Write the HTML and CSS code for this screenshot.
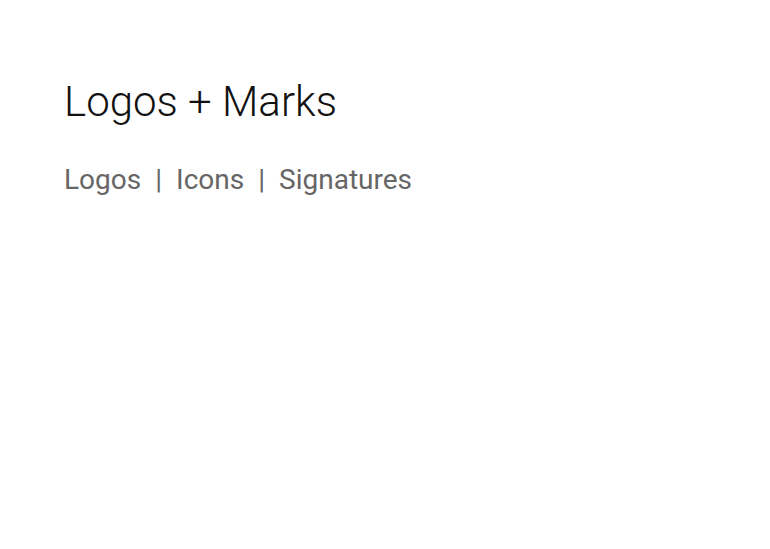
FILE: index.html
```html
<!DOCTYPE html>
<html>
<head>
<meta charset="utf-8">
<link rel="stylesheet" href="styles.css">
</head>
<body>
<main class="page">
  <h1 class="title">Logos + Marks</h1>
  <nav class="subnav">
    <a class="link">Logos</a>
    <span class="sep">|</span>
    <a class="link">Icons</a>
    <span class="sep">|</span>
    <a class="link">Signatures</a>
  </nav>
</main>
</body>
</html>
```
FILE: styles.css
```css
html, body {
  margin: 0;
  padding: 0;
  background: #ffffff;
}
.page {
  padding: 78px 64px 0;
  font-family: Roboto, "Liberation Sans", sans-serif;
}
.title {
  margin: 0;
  font-weight: 300;
  font-size: 42px;
  line-height: 48px;
  color: #111111;
}
.subnav {
  margin-top: 38px;
  display: flex;
  align-items: baseline;
  gap: 14px;
  font-size: 28px;
  line-height: 32px;
  color: #666666;
}
.link {
  color: #666666;
}
.sep {
  color: #666666;
}
```
